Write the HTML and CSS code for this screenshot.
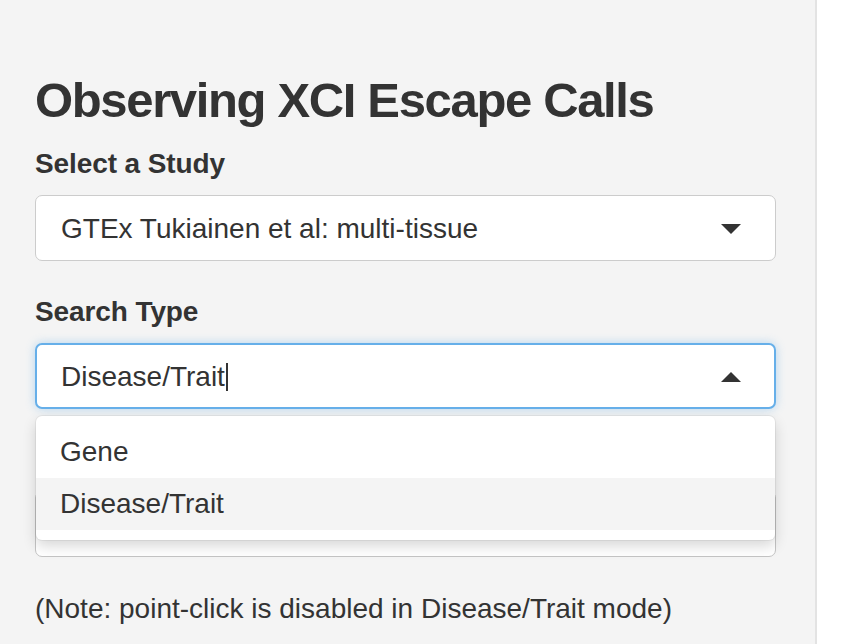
FILE: index.html
```html
<!DOCTYPE html>
<html>
<head>
<meta charset="utf-8">
<link rel="stylesheet" href="styles.css">
</head>
<body>
<div class="page">
  <aside class="panel">
    <h2 class="title">Observing XCI Escape Calls</h2>
    <div class="field">
      <label class="label">Select a Study</label>
      <div class="select">
        <span class="select-text">GTEx Tukiainen et al: multi-tissue</span>
        <span class="caret caret-down"></span>
      </div>
    </div>
    <div class="field field-search">
      <label class="label">Search Type</label>
      <div class="select-wrap">
        <div class="select select-focus">
          <span class="select-text">Disease/Trait<span class="cursor"></span></span>
          <span class="caret caret-up"></span>
        </div>
        <div class="dropdown">
          <div class="option">Gene</div>
          <div class="option option-active">Disease/Trait</div>
        </div>
      </div>
    </div>
    <div class="field-hidden">
      <div class="select"></div>
    </div>
    <p class="note">(Note: point-click is disabled in Disease/Trait mode)</p>
  </aside>
  <main class="main"></main>
</div>
</body>
</html>
```

FILE: styles.css
```css
html, body {
  margin: 0;
  padding: 0;
  height: 100%;
  background: #ffffff;
}
body {
  font-family: "Liberation Sans", Arial, sans-serif;
  color: #333333;
}
.page {
  display: flex;
  height: 644px;
  overflow: hidden;
}
.panel {
  width: 817px;
  box-sizing: border-box;
  background: #f4f4f4;
  border-right: 2px solid #e3e3e3;
  padding: 73px 39px 0 35px;
  flex: none;
}
.main {
  flex: 1;
}
.title {
  margin: 0;
  font-size: 49px;
  line-height: 55px;
  font-weight: bold;
  letter-spacing: -1.35px;
}
.field {
  margin-top: 20px;
}
.label {
  display: block;
  font-size: 28px;
  line-height: 32px;
  font-weight: bold;
  margin-bottom: 15px;
  letter-spacing: -0.1px;
}
.select-wrap {
  position: relative;
}
.select {
  height: 66px;
  box-sizing: border-box;
  border: 1px solid #cccccc;
  border-radius: 7px;
  background: #ffffff;
  display: flex;
  align-items: center;
  padding: 2px 34px 0 25px;
  font-size: 28px;
}
.select-text {
  flex: 1;
  display: flex;
  align-items: center;
}
.cursor {
  display: inline-block;
  width: 2px;
  height: 28px;
  background: #333333;
  margin-left: 1px;
}
.caret {
  width: 0;
  height: 0;
  border-left: 10px solid transparent;
  border-right: 10px solid transparent;
}
.caret-down {
  border-top: 10px solid #333333;
}
.caret-up {
  border-bottom: 10px solid #333333;
}
.select-focus {
  border-color: #66afe9;
  border-width: 2px;
  padding-left: 24px;
  padding-right: 33px;
  box-shadow: 0 0 10px rgba(102, 175, 233, 0.45);
}
.field-search {
  margin-top: 35px;
}
.dropdown {
  position: absolute;
  top: 73px;
  left: 1px;
  right: 1px;
  background: #ffffff;
  border-radius: 6px;
  box-shadow: 0 6px 14px rgba(0, 0, 0, 0.16), 0 0 0 1px rgba(0, 0, 0, 0.05);
  padding: 10px 0;
  z-index: 5;
}
.option {
  height: 52px;
  line-height: 52px;
  padding-left: 24px;
  font-size: 28px;
}
.option-active {
  background: #f4f4f4;
}
.field-hidden {
  margin-top: 82px;
}
.field-hidden .select {
  border-color: #c4c4c4;
}
.note {
  margin: 36px 0 0;
  font-size: 28px;
  line-height: 32px;
}
```
